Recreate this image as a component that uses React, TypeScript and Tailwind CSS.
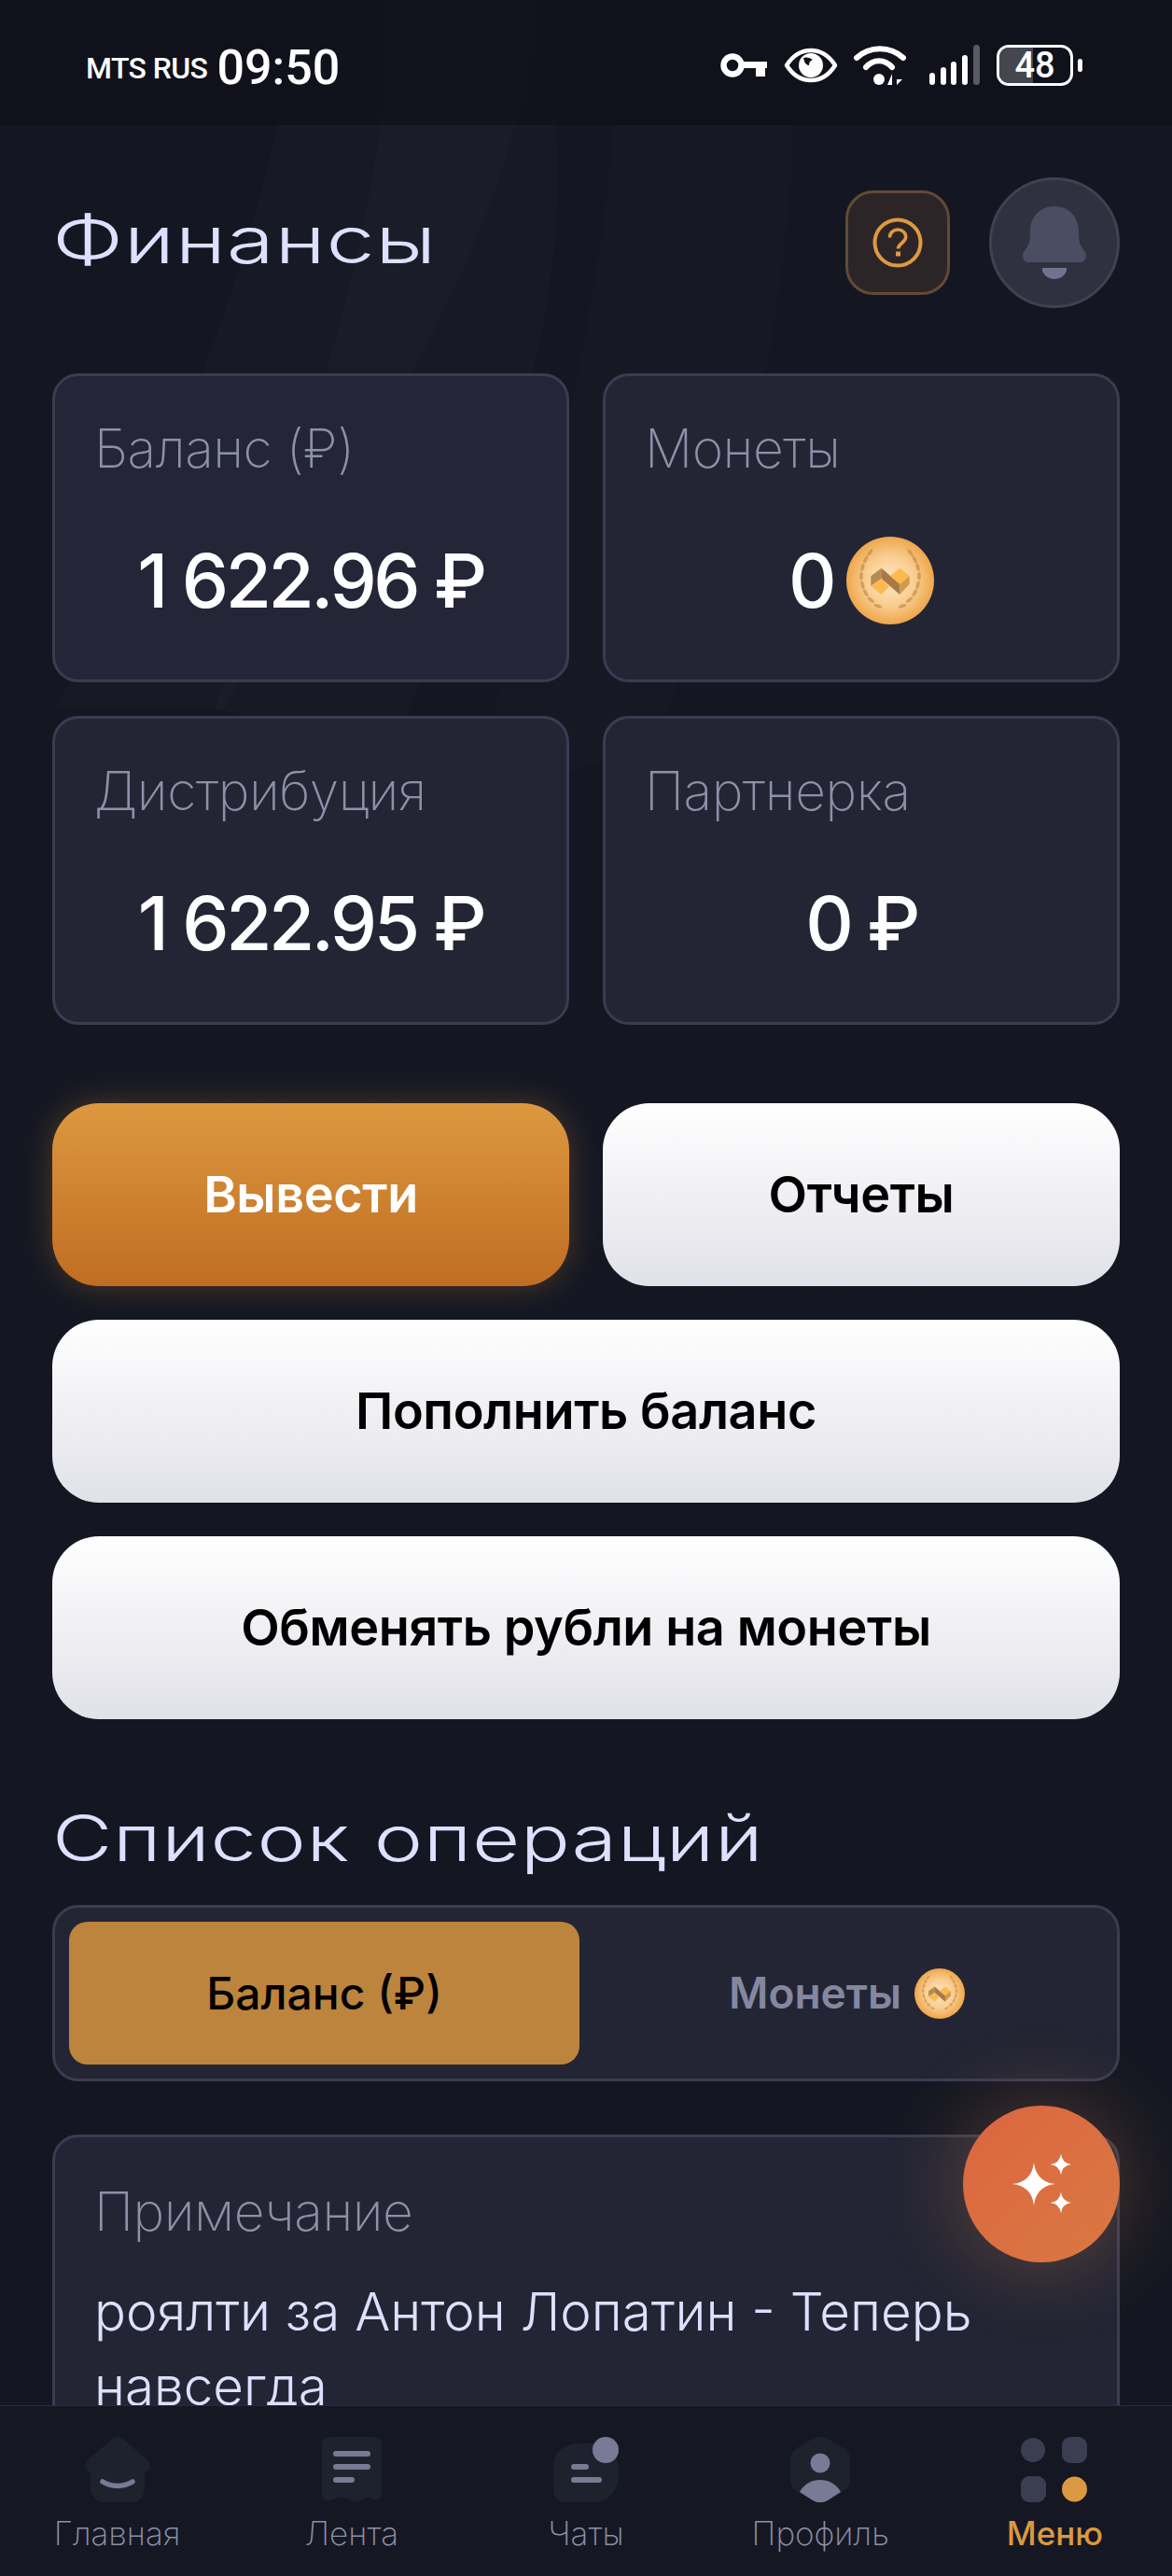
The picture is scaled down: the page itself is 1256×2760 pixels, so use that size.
const sans = "font-['Inter','Noto_Sans',sans-serif]";

function Coin({ size, id }: { size: number; id: string }) {
  const leaves = [
    [27, 18, 35], [22, 26, 25], [18.5, 35, 15], [17, 45, 0], [18.5, 55, -15], [22, 64, -30], [28, 72, -50], [36, 79, -70],
  ];
  return (
    <svg width={size} height={size} viewBox="0 0 100 100" className="shrink-0">
      <defs>
        <radialGradient id={id} cx="50%" cy="50%" r="52%">
          <stop offset="0%" stopColor="#fee6c4" />
          <stop offset="55%" stopColor="#f9cd90" />
          <stop offset="100%" stopColor="#eda345" />
        </radialGradient>
      </defs>
      <circle cx="50" cy="50" r="50" fill={`url(#${id})`} />
      {leaves.map(([x, y, r], i) => (
        <g key={i} fill="#b98442" fillOpacity="0.6">
          <ellipse cx={x} cy={y} rx="1.9" ry="4.6" transform={`rotate(${r} ${x} ${y})`} />
          <ellipse cx={100 - x} cy={y} rx="1.9" ry="4.6" transform={`rotate(${-r} ${100 - x} ${y})`} />
        </g>
      ))}
      <path d="M28 45L40 36V48L28 56Z" fill="#b58a52" />
      <path d="M40 36L61 54V66L40 48Z" fill="#a67946" />
      <path d="M28 56L40 48L49 57L39.5 66Z" fill="#fdb84f" />
      <path d="M49.6 45L61 36L72 45L61 54Z" fill="#fdb84f" />
      <path d="M61 54L72 45V54L61 66Z" fill="#d09a4a" />
    </svg>
  );
}

function StatCard({ label, children, lift }: { label: string; children: React.ReactNode; lift?: boolean }) {
  return (
    <div className={`h-[331px] rounded-[28px] border-[3px] border-[#3a3c52] flex flex-col ${lift ? "bg-[#242637]" : "bg-[#232534]"}`}>
      <div className="mt-[46px] ml-[42px] h-[64px] flex items-center text-[57px] font-extralight text-[#8e90a9] tracking-[-0.5px]">{label}</div>
      <div className="mt-[69px] h-[80px] flex items-center justify-center gap-[14px] text-[80px] font-medium text-white tracking-[-3.5px]">{children}</div>
    </div>
  );
}

function Btn({ children, primary }: { children: React.ReactNode; primary?: boolean }) {
  return (
    <button
      className={`h-[196px] w-full rounded-[50px] pb-[2px] text-[54px] font-semibold tracking-[-0.4px] ${
        primary
          ? "bg-gradient-to-b from-[#dd983f] to-[#bf6d22] text-white shadow-[0_0_34px_rgba(220,140,60,0.3)]"
          : "bg-gradient-to-b from-[#ffffff] to-[#e1e1e9] text-black"
      }`}
    >
      {children}
    </button>
  );
}

function NavItem({ label, active, children }: { label: string; active?: boolean; children: React.ReactNode }) {
  return (
    <div className="flex flex-col items-center">
      <div className="h-[70px] flex items-center justify-center">{children}</div>
      <div className={`mt-[10px] h-[46px] flex items-center text-[35px] ${active ? "font-medium text-[#db9842]" : "font-extralight text-[#8e90a9]"}`}>{label}</div>
    </div>
  );
}

function Star({ x, y, r }: { x: number; y: number; r: number }) {
  const k = r * 0.2;
  return (
    <path
      d={`M${x} ${y - r} Q${x + k * 0.5} ${y - k * 0.5} ${x + r} ${y} Q${x + k * 0.5} ${y + k * 0.5} ${x} ${y + r} Q${x - k * 0.5} ${y + k * 0.5} ${x - r} ${y} Q${x - k * 0.5} ${y - k * 0.5} ${x} ${y - r}Z`}
      fill="#fff"
    />
  );
}

export default function App() {
  return (
    <div className={`relative h-[2760px] w-[1256px] overflow-hidden bg-[#141722] flex flex-col ${sans}`}>
      {/* faint background swirl */}
      <svg className="absolute left-0 top-0 pointer-events-none" width="1256" height="900" viewBox="0 0 1256 900">
        <path d="M320 0 C300 200 200 480 60 760 L240 760 C380 500 560 250 575 0 Z" fill="#fff" fillOpacity="0.015" />
        <path d="M415 0 C420 220 330 470 230 760 L420 800 C560 500 640 260 575 0 Z" fill="#fff" fillOpacity="0.015" />
        <path d="M660 0 C670 200 610 500 500 860 L700 800 C820 500 860 250 850 0 Z" fill="#fff" fillOpacity="0.01" />
      </svg>

      <div className="relative flex flex-1 min-h-0 flex-col overflow-hidden">
        {/* status bar */}
        <div className="h-[134px] shrink-0 bg-[#0e1018]/70 flex items-start pl-[92px] pr-[96px] pt-[45px] font-['Roboto',sans-serif] text-white">
          <div className="flex items-center gap-[10px] h-[50px] mt-[3px]">
            <span className="text-[32px] font-medium tracking-[-0.6px]">MTS RUS</span>
            <span className="text-[52px] font-medium leading-none">09:50</span>
          </div>
          <div className="ml-auto flex items-center h-[50px]">
            <svg width="50" height="26" viewBox="0 0 50 26" className="mr-[18px]">
              <circle cx="13" cy="13" r="9.5" fill="none" stroke="#fff" strokeWidth="6.5" />
              <path d="M24 9H50V16H48V25H38V16H24Z" fill="#fff" />
            </svg>
            <svg width="58" height="38" viewBox="0 0 58 38" className="mr-[17px]">
              <path d="M3 19C10 8 19 3 29 3s19 5 26 16c-7 11-16 16-26 16S10 30 3 19Z" fill="none" stroke="#fff" strokeWidth="4.5" strokeLinejoin="round" />
              <circle cx="29" cy="19" r="13" fill="#fff" />
              <path d="M21 11a11 11 0 0 1 10 2c-3 1-4 3-4 6-3 0-5-3-6-8Z" fill="#0e1018" />
            </svg>
            <svg width="56" height="44" viewBox="0 0 56 44" className="mr-[25px]">
              <path d="M3 14C17 1 39 1 53 14" fill="none" stroke="#fff" strokeWidth="6" strokeLinecap="round" />
              <path d="M13 24C21 15 33 15 41 24" fill="none" stroke="#fff" strokeWidth="6" strokeLinecap="round" />
              <circle cx="27" cy="37" r="6" fill="#fff" />
              <path d="M36 43H41V31ZM46 31V43L52 37H46Z" fill="#fff" />
            </svg>
            <svg width="54" height="44" viewBox="0 0 54 44" className="mr-[18px]">
              <rect x="0" y="30" width="6" height="13" rx="3" fill="#fff" />
              <rect x="12" y="24" width="6" height="19" rx="3" fill="#fff" />
              <rect x="23" y="18" width="6" height="25" rx="3" fill="#fff" />
              <rect x="35" y="11" width="6" height="32" rx="3" fill="#fff" />
              <rect x="47" y="0" width="7" height="43" rx="3.5" fill="#5a5b62" />
            </svg>
            <div className="relative h-[44px] w-[82px] rounded-[13px] border-[3px] border-white overflow-hidden flex items-center justify-center">
              <div className="absolute inset-y-0 left-0 w-[36px] bg-[#45464e]" />
              <span className="relative text-[38px] font-medium leading-none">48</span>
            </div>
            <div className="ml-[5px] h-[14px] w-[5px] rounded-full bg-white" />
          </div>
        </div>

        {/* content */}
        <div className="px-[56px]">
          <div className="mt-[56px] h-[140px] flex items-center">
            <h1 className="pb-[6px] text-[70px] font-light text-[#dde0ff] origin-left scale-x-[1.33] tracking-[0.5px] leading-none">Финансы</h1>
            <div className="ml-auto flex items-center gap-[42px]">
              <div className="h-[112px] w-[112px] rounded-[30px] border-[3px] border-[#614a35] bg-[#2c2528] flex items-center justify-center">
                <svg width="54" height="54" viewBox="0 0 54 54" fill="none" stroke="#dd9a3f" strokeWidth="4">
                  <circle cx="27" cy="27" r="24.5" />
                  <path d="M18.5 21.5c0-5 4-8.5 8.7-8.5s8.5 3.3 8.5 7.8c0 6.5-8.2 6.8-8.2 12.7" strokeWidth="3.6" />
                  <rect x="25" y="36.5" width="5" height="5" fill="#dd9a3f" stroke="none" />
                </svg>
              </div>
              <div className="h-[140px] w-[140px] rounded-full border-[3px] border-[#3f4250] bg-[#2f3140] flex items-center justify-center">
                <svg width="70" height="78" viewBox="0 0 70 78">
                  <path d="M35 0C50 0 61 11 61 27C61 38 62 42 68 49C70 52 69 60 63 60H7C1 60 0 52 2 49C8 42 9 38 9 27C9 11 20 0 35 0Z" fill="#4b4d63" />
                  <path d="M22 66H48V69C46 75 40 78 35 78S24 75 22 69Z" fill="#72738f" />
                </svg>
              </div>
            </div>
          </div>

          <div className="mt-[70px] grid grid-cols-2 gap-[36px]">
            <StatCard label="Баланс (₽)" lift>1 622.96 ₽</StatCard>
            <StatCard label="Монеты">
              <span>0</span>
              <Coin size={94} id="coinA" />
            </StatCard>
            <StatCard label="Дистрибуция">1 622.95 ₽</StatCard>
            <StatCard label="Партнерка">0 ₽</StatCard>
          </div>

          <div className="mt-[84px] flex flex-col gap-[36px]">
            <div className="grid grid-cols-2 gap-[36px]">
              <Btn primary>Вывести</Btn>
              <Btn>Отчеты</Btn>
            </div>
            <Btn>Пополнить баланс</Btn>
            <Btn>Обменять рубли на монеты</Btn>
          </div>

          <h2 className="mt-[88px] h-[78px] flex items-center text-[68px] font-light text-[#dde0ff] origin-left scale-x-[1.3] tracking-[0.5px] leading-none">Список операций</h2>

          <div className="mt-[33px] h-[189px] rounded-[28px] border-[3px] border-[#3a3c52] bg-[#232534] p-[15px] flex">
            <div className="w-[547px] rounded-[20px] bg-[#bd843d] flex items-center justify-center text-[48px] font-medium text-black">Баланс (₽)</div>
            <div className="flex-1 flex items-center justify-center gap-[14px] pl-[12px] text-[46px] font-semibold text-[#85879f]">
              <span>Монеты</span>
              <Coin size={54} id="coinB" />
            </div>
          </div>

          <div className="mt-[57px] h-[400px] rounded-[28px] border-[3px] border-[#3a3c52] bg-[#232534] pl-[42px] pt-[48px]">
            <div className="h-[64px] flex items-center text-[57px] font-extralight text-[#8e90a9] tracking-[-0.5px]">Примечание</div>
            <div className="mt-[35px] w-[1060px] text-[56.5px] leading-[80px] font-light text-[#dde0ff]">роялти за Антон Лопатин - Теперь навсегда</div>
          </div>
        </div>
      </div>

      {/* bottom nav */}
      <nav className="relative h-[183px] shrink-0 border-t-[1px] border-[#272a39] bg-[#151823] grid grid-cols-5 pt-[33px]">
        <NavItem label="Главная">
          <svg width="70" height="70" viewBox="0 0 70 70">
            <path d="M35 0C38 0 40 1 42 3L66 24C70 28 71 31 68 35L64 38V54C64 64 58 70 50 70H20C12 70 6 64 6 54V38L2 35C-1 31 0 28 4 24L28 3C30 1 32 0 35 0Z" fill="#1e222d" />
            <path d="M19 48C29 54 41 54 51 48" fill="none" stroke="#787a96" strokeWidth="5.5" strokeLinecap="round" />
          </svg>
        </NavItem>
        <NavItem label="Лента">
          <svg width="64" height="70" viewBox="0 0 64 70">
            <path d="M8 0H56C60 0 64 3 64 8V62C64 67 60 68 56 67C50 65 48 64 44 67C38 71 34 70 30 68C24 64 18 64 12 67C6 69 0 67 0 62V8C0 3 4 0 8 0Z" fill="#1e222d" />
            <rect x="12" y="15" width="40" height="6" rx="3" fill="#787a96" />
            <rect x="12" y="29" width="40" height="6" rx="3" fill="#787a96" />
            <rect x="12" y="43" width="23" height="6" rx="3" fill="#787a96" />
          </svg>
        </NavItem>
        <NavItem label="Чаты">
          <svg width="70" height="70" viewBox="0 0 70 70">
            <path d="M28 7H50C62 10 70 20 70 40C70 58 58 70 42 70H14C5 70 0 64 0 56V32C0 16 12 7 28 7Z" fill="#1e222d" />
            <rect x="19" y="29" width="19" height="6" rx="3" fill="#787a96" />
            <rect x="19" y="43" width="33" height="6" rx="3" fill="#787a96" />
            <circle cx="56" cy="14" r="14" fill="#787a96" />
          </svg>
        </NavItem>
        <NavItem label="Профиль">
          <svg width="64" height="70" viewBox="0 0 64 70">
            <path d="M24 2C29 -1 35 -1 40 2L57 12C61 15 64 18 64 24V46C64 52 61 55 57 58L40 68C35 71 29 71 24 68L7 58C3 55 0 52 0 46V24C0 18 3 15 7 12Z" fill="#1e222d" />
            <circle cx="32" cy="28" r="10.5" fill="#787a96" />
            <path d="M10 59C15 50 23 46 32 46S49 50 54 59L40 68C35 71 29 71 24 68Z" fill="#787a96" />
          </svg>
        </NavItem>
        <NavItem label="Меню" active>
          <svg width="72" height="70" viewBox="0 0 72 70">
            <circle cx="13" cy="14" r="13" fill="#3b3d50" />
            <rect x="44" y="0" width="27" height="28" rx="9" fill="#3b3d50" />
            <rect x="0" y="42" width="27" height="28" rx="9" fill="#3b3d50" />
            <circle cx="57.5" cy="56" r="13.5" fill="#db9842" />
          </svg>
        </NavItem>
      </nav>

      {/* floating action button */}
      <div className="absolute left-[1032px] top-[2256px] h-[168px] w-[168px] rounded-full bg-gradient-to-br from-[#dc6640] to-[#d97842] shadow-[0_0_90px_rgba(235,140,80,0.32)] flex items-center justify-center">
        <svg width="64" height="64" viewBox="0 0 64 64">
          <Star x={24} y={32} r={23} />
          <Star x={53} y={11} r={11.5} />
          <Star x={53} y={52} r={11.5} />
        </svg>
      </div>
    </div>
  );
}
